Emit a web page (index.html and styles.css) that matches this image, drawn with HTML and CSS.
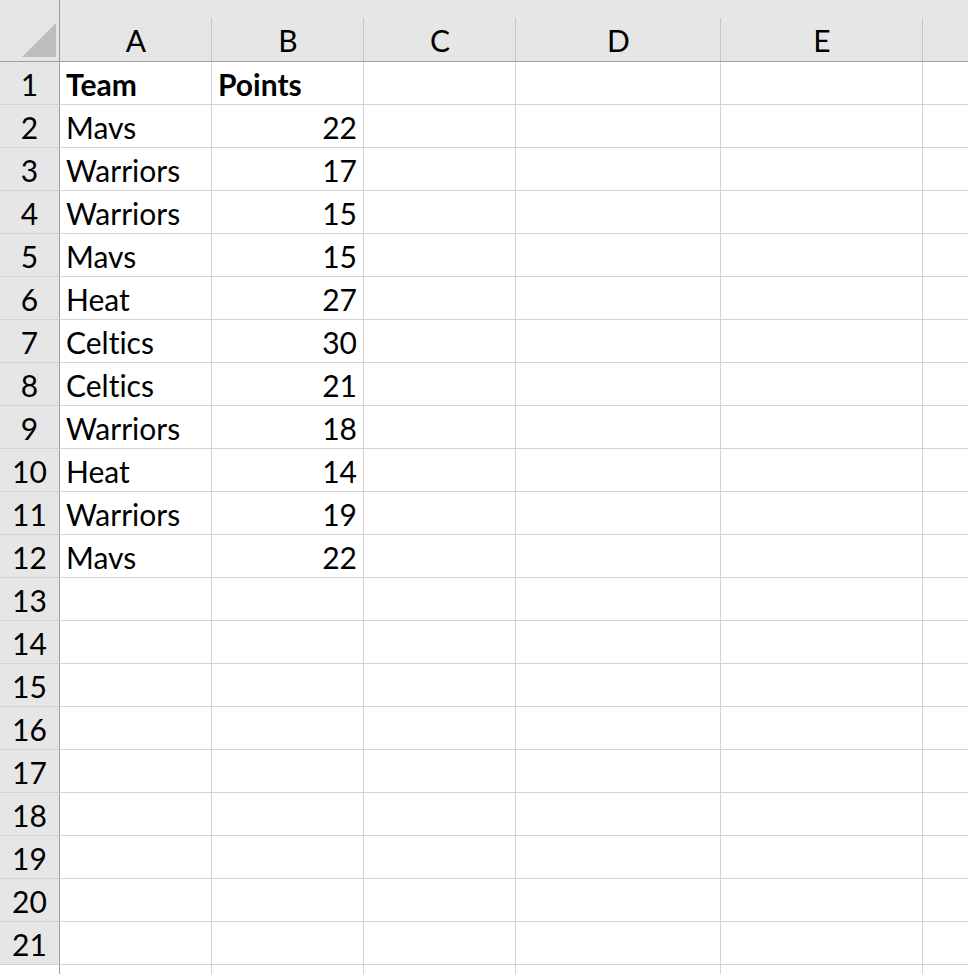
FILE: index.html
```
<!DOCTYPE html>
<html>
<head>
<meta charset="utf-8">
<link rel="stylesheet" href="styles.css">
</head>
<body>
<div class="sheet">
  <div class="corner"><svg class="tri" width="60" height="61" viewBox="0 0 60 61"><polygon points="22,57 56,57 56,23" fill="#bdbdbd"/></svg></div>
  <div class="colhead">A</div>
  <div class="colhead">B</div>
  <div class="colhead">C</div>
  <div class="colhead">D</div>
  <div class="colhead">E</div>
  <div class="colhead last"></div>

  <div class="rowhead">1</div><div class="cell bold">Team</div><div class="cell bold">Points</div><div class="cell"></div><div class="cell"></div><div class="cell"></div><div class="cell"></div>
  <div class="rowhead">2</div><div class="cell">Mavs</div><div class="cell num">22</div><div class="cell"></div><div class="cell"></div><div class="cell"></div><div class="cell"></div>
  <div class="rowhead">3</div><div class="cell">Warriors</div><div class="cell num">17</div><div class="cell"></div><div class="cell"></div><div class="cell"></div><div class="cell"></div>
  <div class="rowhead">4</div><div class="cell">Warriors</div><div class="cell num">15</div><div class="cell"></div><div class="cell"></div><div class="cell"></div><div class="cell"></div>
  <div class="rowhead">5</div><div class="cell">Mavs</div><div class="cell num">15</div><div class="cell"></div><div class="cell"></div><div class="cell"></div><div class="cell"></div>
  <div class="rowhead">6</div><div class="cell">Heat</div><div class="cell num">27</div><div class="cell"></div><div class="cell"></div><div class="cell"></div><div class="cell"></div>
  <div class="rowhead">7</div><div class="cell">Celtics</div><div class="cell num">30</div><div class="cell"></div><div class="cell"></div><div class="cell"></div><div class="cell"></div>
  <div class="rowhead">8</div><div class="cell">Celtics</div><div class="cell num">21</div><div class="cell"></div><div class="cell"></div><div class="cell"></div><div class="cell"></div>
  <div class="rowhead">9</div><div class="cell">Warriors</div><div class="cell num">18</div><div class="cell"></div><div class="cell"></div><div class="cell"></div><div class="cell"></div>
  <div class="rowhead">10</div><div class="cell">Heat</div><div class="cell num">14</div><div class="cell"></div><div class="cell"></div><div class="cell"></div><div class="cell"></div>
  <div class="rowhead">11</div><div class="cell">Warriors</div><div class="cell num">19</div><div class="cell"></div><div class="cell"></div><div class="cell"></div><div class="cell"></div>
  <div class="rowhead">12</div><div class="cell">Mavs</div><div class="cell num">22</div><div class="cell"></div><div class="cell"></div><div class="cell"></div><div class="cell"></div>
  <div class="rowhead">13</div><div class="cell"></div><div class="cell"></div><div class="cell"></div><div class="cell"></div><div class="cell"></div><div class="cell"></div>
  <div class="rowhead">14</div><div class="cell"></div><div class="cell"></div><div class="cell"></div><div class="cell"></div><div class="cell"></div><div class="cell"></div>
  <div class="rowhead">15</div><div class="cell"></div><div class="cell"></div><div class="cell"></div><div class="cell"></div><div class="cell"></div><div class="cell"></div>
  <div class="rowhead">16</div><div class="cell"></div><div class="cell"></div><div class="cell"></div><div class="cell"></div><div class="cell"></div><div class="cell"></div>
  <div class="rowhead">17</div><div class="cell"></div><div class="cell"></div><div class="cell"></div><div class="cell"></div><div class="cell"></div><div class="cell"></div>
  <div class="rowhead">18</div><div class="cell"></div><div class="cell"></div><div class="cell"></div><div class="cell"></div><div class="cell"></div><div class="cell"></div>
  <div class="rowhead">19</div><div class="cell"></div><div class="cell"></div><div class="cell"></div><div class="cell"></div><div class="cell"></div><div class="cell"></div>
  <div class="rowhead">20</div><div class="cell"></div><div class="cell"></div><div class="cell"></div><div class="cell"></div><div class="cell"></div><div class="cell"></div>
  <div class="rowhead">21</div><div class="cell"></div><div class="cell"></div><div class="cell"></div><div class="cell"></div><div class="cell"></div><div class="cell"></div>
  <div class="rowhead blank"></div><div class="cell"></div><div class="cell"></div><div class="cell"></div><div class="cell"></div><div class="cell"></div><div class="cell"></div>
</div>
</body>
</html>
```
FILE: styles.css
```
html, body {
  margin: 0;
  padding: 0;
  background: #ffffff;
  overflow: hidden;
}
.sheet {
  width: 968px;
  height: 974px;
  overflow: hidden;
  display: grid;
  grid-template-columns: 60px 152px 152px 152px 205px 202px 120px;
  grid-template-rows: 62px repeat(22, 43px);
  font-family: Lato, "Open Sans", sans-serif;
  font-size: 30px;
  font-variant-ligatures: none;
  color: #000;
}
.sheet > div {
  box-sizing: border-box;
  white-space: nowrap;
  overflow: hidden;
}
.corner {
  background: #e6e6e6;
  border-right: 1px solid #9e9e9e;
  border-bottom: 1px solid #9e9e9e;
}
.tri {
  display: block;
}
.colhead {
  background: linear-gradient(#c6c6c6, #c6c6c6) right bottom / 1px 43px no-repeat, #e6e6e6;
  border-bottom: 1px solid #9e9e9e;
  text-align: center;
  padding-top: 22px;
  line-height: 36px;
}
.rowhead {
  background: #e6e6e6;
  border-right: 1px solid #9e9e9e;
  border-bottom: 1px solid #d4d4d4;
  text-align: center;
  line-height: 42px;
  padding-top: 1px;
}
.rowhead.blank {
  background: #ffffff;
  border-bottom: none;
}
.cell {
  border-right: 1px solid #d4d4d4;
  border-bottom: 1px solid #d4d4d4;
  line-height: 42px;
  padding: 1px 6px 0 6px;
}
.bold {
  font-weight: bold;
}
.num {
  text-align: right;
}
```
